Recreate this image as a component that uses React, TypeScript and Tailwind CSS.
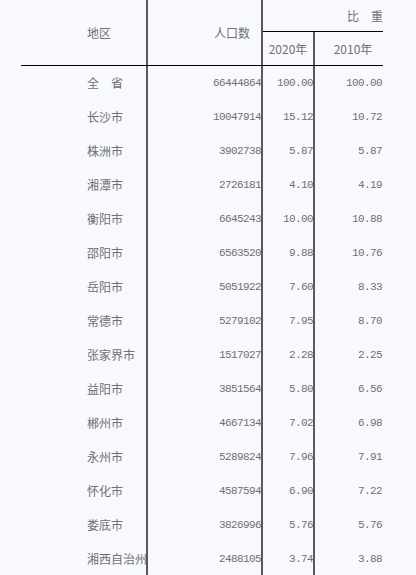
const rows = [
  { name: "全　省", pop: "66444864", y2020: "100.00", y2010: "100.00" },
  { name: "长沙市", pop: "10047914", y2020: "15.12", y2010: "10.72" },
  { name: "株洲市", pop: "3902738", y2020: "5.87", y2010: "5.87" },
  { name: "湘潭市", pop: "2726181", y2020: "4.10", y2010: "4.19" },
  { name: "衡阳市", pop: "6645243", y2020: "10.00", y2010: "10.88" },
  { name: "邵阳市", pop: "6563520", y2020: "9.88", y2010: "10.76" },
  { name: "岳阳市", pop: "5051922", y2020: "7.60", y2010: "8.33" },
  { name: "常德市", pop: "5279102", y2020: "7.95", y2010: "8.70" },
  { name: "张家界市", pop: "1517027", y2020: "2.28", y2010: "2.25" },
  { name: "益阳市", pop: "3851564", y2020: "5.80", y2010: "6.56" },
  { name: "郴州市", pop: "4667134", y2020: "7.02", y2010: "6.98" },
  { name: "永州市", pop: "5289824", y2020: "7.96", y2010: "7.91" },
  { name: "怀化市", pop: "4587594", y2020: "6.90", y2010: "7.22" },
  { name: "娄底市", pop: "3826996", y2020: "5.76", y2010: "5.76" },
  { name: "湘西自治州", pop: "2488105", y2020: "3.74", y2010: "3.88" },
];

const cjk = "font-['Noto_Sans_CJK_SC',sans-serif] text-[12px] text-[#707070]";
const num = "font-['Liberation_Mono',monospace] text-[11px] tracking-[-0.6px] text-[#707070]";
const vline = "border-r-2 border-r-[#5a5a5a]";

export default function App() {
  return (
    <div className="min-h-screen overflow-hidden bg-[#f8f9fe] pl-[21px]">
      <div className="w-[362px]">
        {/* header */}
        <div className="grid h-[66px] grid-cols-[127px_115px_120px] border-b border-b-black">
          <div className={`flex items-center pl-[66px] ${vline} ${cjk}`}>地区</div>
          <div className={`flex items-center justify-end pr-[11px] ${vline} ${cjk}`}>人口数</div>
          <div className="flex flex-col">
            <div className={`flex h-[32px] items-center justify-end border-b border-b-black ${cjk}`}>比　重</div>
            <div className="grid flex-1 grid-cols-[52px_68px]">
              <div className={`flex items-center justify-center ${vline} ${cjk}`}>2020年</div>
              <div className={`flex items-center justify-center pl-[8px] ${cjk}`}>2010年</div>
            </div>
          </div>
        </div>
        {/* body */}
        {rows.map((r) => (
          <div key={r.name} className="grid h-[34px] grid-cols-[127px_115px_52px_68px]">
            <div className={`flex items-center whitespace-nowrap pl-[66px] ${vline} ${cjk}`}>{r.name}</div>
            <div className={`flex items-center justify-end ${vline} ${num}`}>{r.pop}</div>
            <div className={`flex items-center justify-end ${vline} ${num}`}>{r.y2020}</div>
            <div className={`flex items-center justify-end pr-[1px] ${num}`}>{r.y2010}</div>
          </div>
        ))}
      </div>
    </div>
  );
}
